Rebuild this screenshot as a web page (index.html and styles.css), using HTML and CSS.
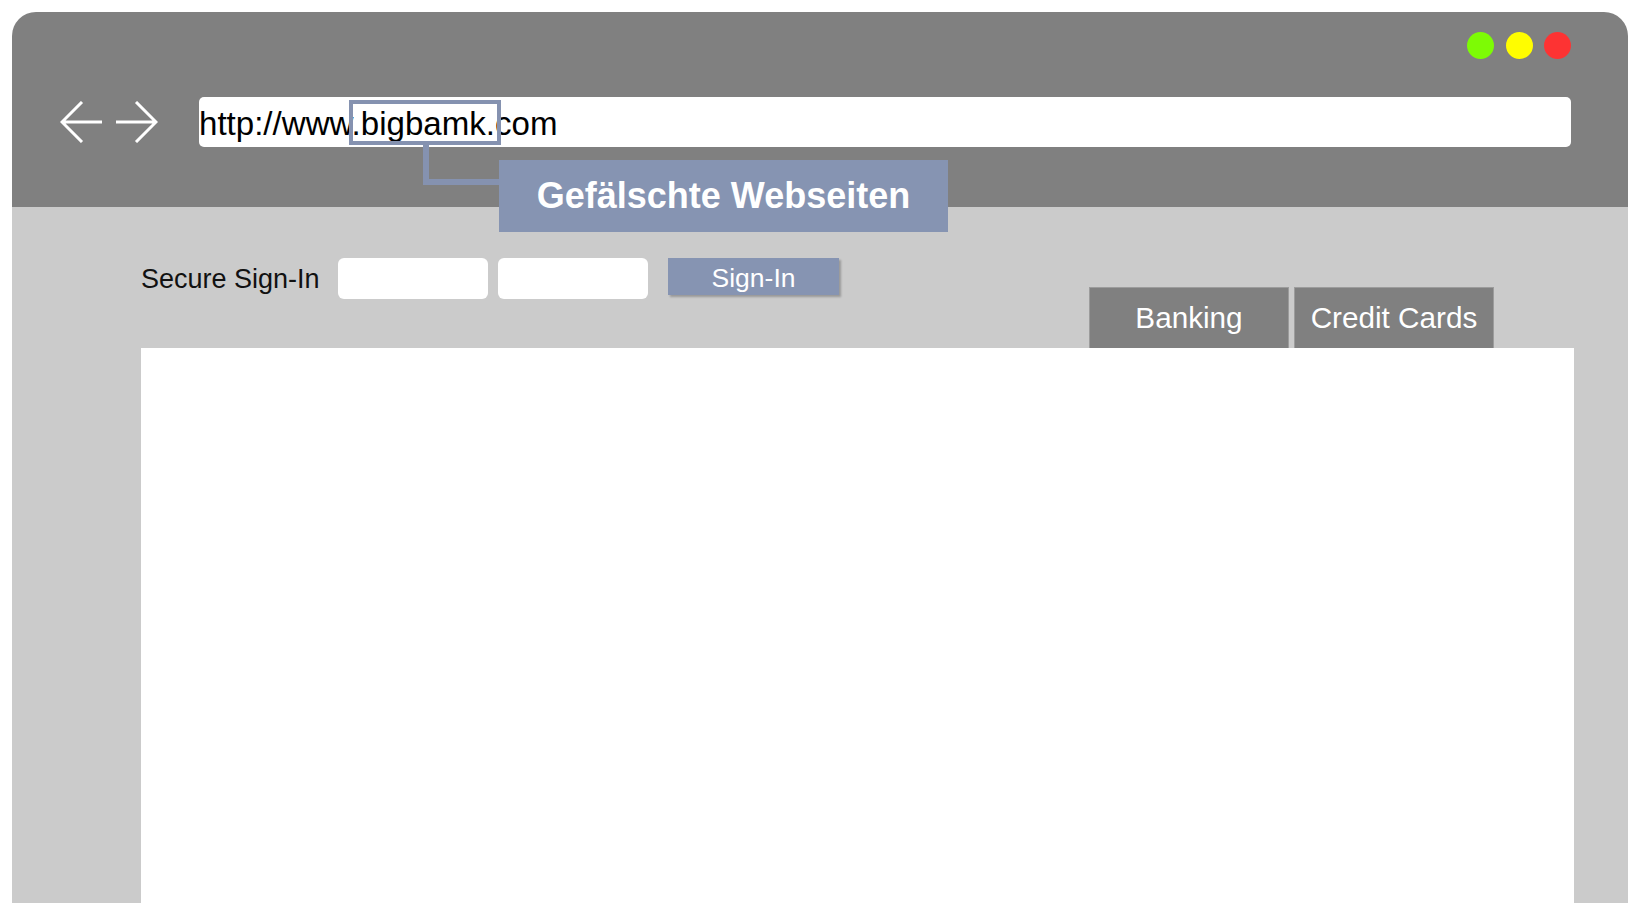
FILE: index.html
```html
<!DOCTYPE html>
<html lang="de">
<head>
<meta charset="utf-8">
<title>Gefälschte Webseiten</title>
<link rel="stylesheet" href="styles.css">
</head>
<body>
<div class="window">
  <header class="chrome">
    <div class="lights">
      <span class="dot green"></span>
      <span class="dot yellow"></span>
      <span class="dot red"></span>
    </div>
    <div class="toolbar">
      <svg class="nav back" width="42" height="42" viewBox="0 0 42 42" aria-hidden="true">
        <path d="M42 21H2M22 1L2 21L22 41" fill="none" stroke="#fff" stroke-width="3"/>
      </svg>
      <svg class="nav fwd" width="42" height="42" viewBox="0 0 42 42" aria-hidden="true">
        <path d="M0 21H40M20 1L40 21L20 41" fill="none" stroke="#fff" stroke-width="3"/>
      </svg>
      <div class="url">http://www.bigbamk.com</div>
    </div>
  </header>

  <div class="hl"></div>
  <div class="link"></div>
  <div class="tag">Gefälschte Webseiten</div>

  <main class="page">
    <div class="top">
      <div class="signin">
        <span class="label">Secure Sign-In</span>
        <input class="field" type="text" aria-label="Benutzer">
        <input class="field" type="password" aria-label="Passwort">
        <span class="btn">Sign-In</span>
      </div>
      <nav class="tabs">
        <span class="tab">Banking</span>
        <span class="tab">Credit Cards</span>
      </nav>
    </div>
    <div class="content"></div>
  </main>
</div>
</body>
</html>
```

FILE: styles.css
```css
html, body {
  margin: 0;
  padding: 0;
  background: #ffffff;
}

body {
  font-family: "Liberation Sans", Arial, sans-serif;
  width: 1642px;
  height: 915px;
  overflow: hidden;
}

.window {
  position: relative;
  margin: 12px 0 0 12px;
  width: 1616px;
  height: 891px;
  border-radius: 24px 24px 0 0;
  overflow: hidden;
  display: flex;
  flex-direction: column;
}

/* ---------- browser chrome ---------- */
.chrome {
  height: 195px;
  flex: none;
  box-sizing: border-box;
  background: #808080;
  padding: 20px 57px 0 48px;
  display: flex;
  flex-direction: column;
}

.lights {
  display: flex;
  justify-content: flex-end;
  gap: 11.5px;
  height: 27px;
}

.dot {
  width: 27px;
  height: 27px;
  border-radius: 50%;
}
.green { background: #7dfb05; }
.yellow { background: #fffd00; }
.red { background: #fd3333; }

.toolbar {
  margin-top: 38px;
  height: 50px;
  display: flex;
  align-items: center;
}

.nav { display: block; flex: none; }
.fwd { margin-left: 14px; }

.url {
  margin-left: 41px;
  flex: 1;
  height: 50px;
  background: #ffffff;
  border-radius: 5px;
  box-sizing: border-box;
  padding-top: 2px;
  font-size: 33.1px;
  line-height: 50px;
  color: #000;
  white-space: nowrap;
}

/* ---------- callout ---------- */
.hl {
  position: absolute;
  left: 337px;
  top: 88px;
  width: 152px;
  height: 45px;
  box-sizing: border-box;
  border: 4px solid #8592b0;
}

.link {
  position: absolute;
  left: 411px;
  top: 133px;
  width: 76px;
  height: 40px;
  box-sizing: border-box;
  border-left: 6px solid #8592b0;
  border-bottom: 6px solid #8592b0;
}

.tag {
  position: absolute;
  left: 487px;
  top: 148px;
  width: 449px;
  height: 72px;
  background: #8694b2;
  color: #ffffff;
  font-weight: bold;
  font-size: 36px;
  line-height: 72px;
  text-align: center;
  white-space: nowrap;
}

/* ---------- page ---------- */
.page {
  flex: 1;
  background: #cbcbcb;
  box-sizing: border-box;
  padding: 51px 54px 0 129px;
  display: flex;
  flex-direction: column;
}

.top {
  height: 90px;
  flex: none;
  display: flex;
  align-items: flex-start;
}

.signin {
  display: flex;
  align-items: flex-start;
}

.label {
  width: 197px;
  box-sizing: border-box;
  padding-top: 1px;
  font-size: 27px;
  line-height: 41px;
  color: #111111;
  white-space: nowrap;
}

.field {
  display: block;
  width: 150px;
  height: 41px;
  border: 0;
  padding: 0;
  margin: 0;
  background: #ffffff;
  border-radius: 6px;
}
.field + .field { margin-left: 10px; }

.btn {
  margin-left: 20px;
  width: 171px;
  height: 37px;
  box-sizing: border-box;
  padding-top: 3px;
  background: #8694b2;
  color: #ffffff;
  font-size: 26.5px;
  line-height: 34px;
  text-align: center;
  box-shadow: 2px 2px 2px rgba(0, 0, 0, 0.25);
}

.tabs {
  margin-left: auto;
  margin-right: 80px;
  align-self: flex-end;
  display: flex;
  gap: 5px;
}

.tab {
  width: 200px;
  height: 61px;
  box-sizing: border-box;
  background: #808080;
  border: 1px solid #9c9c9c;
  border-bottom: 0;
  color: #ffffff;
  font-size: 29.7px;
  line-height: 59px;
  text-align: center;
  white-space: nowrap;
}

.content {
  flex: 1;
  background: #ffffff;
}
```
